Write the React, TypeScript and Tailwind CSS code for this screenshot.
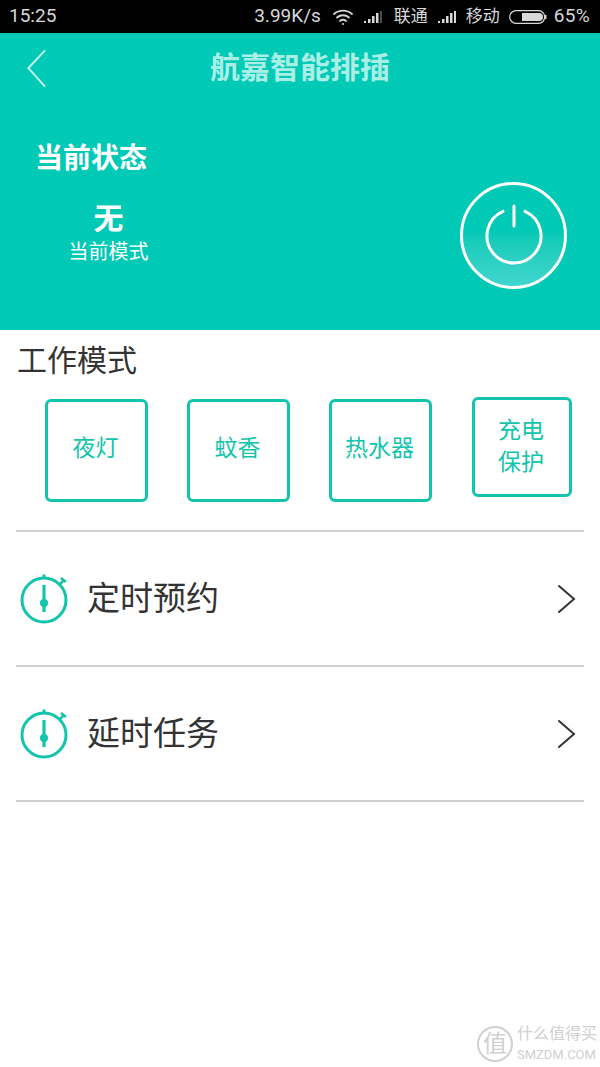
const FONT = "font-['Roboto','Noto_Sans_CJK_SC',sans-serif]";

function WifiIcon() {
  return (
    <svg viewBox="0 0 22 18" className="h-[18px] w-[22px]" fill="none" stroke="#d8d8d8" strokeWidth="1.8" strokeLinecap="round">
      <path d="M2 6c5-4.500 13-4.500 18 0" />
      <path d="M5 9.500c3.400-3 8.600-3 12 0" />
      <path d="M8 13c1.800-1.500 4.200-1.500 6 0" />
      <circle cx="11" cy="16" r="1" fill="#d8d8d8" stroke="none" />
    </svg>
  );
}

function SignalIcon({ dim }: { dim?: boolean }) {
  return (
    <svg viewBox="0 0 20 14" className="h-[14px] w-[20px]" fill="#d8d8d8">
      <rect x="1" y="11" width="2" height="2" />
      <rect x="5" y="9" width="2.500" height="4" />
      <rect x="9" y="6" width="2.500" height="7" />
      <rect x="13" y="3" width="2.500" height="10" />
      <rect x="17" y="1" width="2" height="12" opacity={dim ? 0.35 : 1} />
    </svg>
  );
}

function BatteryIcon() {
  return (
    <svg viewBox="0 0 38 14" className="h-[14px] w-[38px]" fill="none">
      <rect x="0.700" y="0.700" width="35" height="12.600" rx="6.300" stroke="#d8d8d8" strokeWidth="1.200" />
      <path d="M13 3h17a4 4 0 0 1 0 8H13z" fill="#d8d8d8" />
      <rect x="36" y="5" width="1.500" height="4" fill="#d8d8d8" />
    </svg>
  );
}

function StatusBar() {
  return (
    <div className="flex h-[33px] items-center justify-between bg-black pl-[9px] pr-[10px] text-[19px] text-[#d8d8d8]">
      <span>15:25</span>
      <div className="flex items-center">
        <span>3.99K/s</span>
        <span className="ml-[11px]"><WifiIcon /></span>
        <span className="ml-[9px]"><SignalIcon dim /></span>
        <span className="ml-[11px] text-[17px]">联通</span>
        <span className="ml-[9px]"><SignalIcon /></span>
        <span className="ml-[9px] text-[17px]">移动</span>
        <span className="ml-[9px]"><BatteryIcon /></span>
        <span className="ml-[7px] tracking-[0.3px]">65%</span>
      </div>
    </div>
  );
}

function PowerButton() {
  return (
    <div className="flex h-[107px] w-[107px] items-center justify-center rounded-full border-[3px] border-white bg-gradient-to-b from-[#00c9b5] from-45% to-[#3fd6cf]">
      <svg viewBox="0 0 64 64" className="h-[64px] w-[64px]" fill="none" stroke="white" strokeWidth="3" strokeLinecap="round">
        <path d="M21 7.300a27 27 0 1 0 22 0" />
        <path d="M32 2v20" />
      </svg>
    </div>
  );
}

function Header() {
  return (
    <div className="h-[297px] bg-[#00c9b5]">
      <div className="relative flex h-[70px] items-center justify-center">
        <svg viewBox="0 0 20 40" className="absolute left-[26px] top-[17px] h-[38px] w-[20px]" fill="none" stroke="#c8f4ee" strokeWidth="2" strokeLinecap="round">
          <path d="M19 1 2 19l17 19" />
        </svg>
        <span className="mt-[-2px] text-[30px] font-bold text-[#a9efe6]">航嘉智能排插</span>
      </div>
      <div className="flex items-start justify-between pl-[35px] pr-[33px]">
        <div className="w-[147px] pt-[38px] text-white">
          <div className="text-[28px] leading-[36px] font-bold">当前状态</div>
          <div className="mt-[24px] text-center text-[30px] leading-[36px] font-bold">无</div>
          <div className="mt-[2px] text-center text-[20px] leading-[26px]">当前模式</div>
        </div>
        <div className="pt-[79px]">
          <PowerButton />
        </div>
      </div>
    </div>
  );
}

function ModeButton({ lines, className }: { lines: string[]; className: string }) {
  return (
    <div className={`flex flex-col items-center justify-center rounded-[6px] border-[3px] border-[#13c4ac] pr-[2px] text-[23px] leading-[32px] text-[#13c4ac] ${className}`}>
      {lines.map((line) => (
        <span key={line}>{line}</span>
      ))}
    </div>
  );
}

function ClockIcon() {
  return (
    <svg viewBox="0 0 50 52" className="h-[52px] w-[50px]" fill="none" stroke="#13c4ac">
      <circle cx="24" cy="28" r="22" strokeWidth="3" />
      <path d="M24 2.500v4" strokeWidth="3" />
      <path d="M40 12l4-4M41 6l5 4" strokeWidth="2.500" />
      <path d="M24 13v27" strokeWidth="3.200" />
      <circle cx="24" cy="31" r="4" fill="#13c4ac" stroke="none" />
    </svg>
  );
}

function TaskRow({ label }: { label: string }) {
  return (
    <div className="flex h-[135px] items-center border-b-2 border-[#cfcfcf]">
      <div className="ml-[4px] mt-[-2px]">
        <ClockIcon />
      </div>
      <span className="ml-[17px] text-[33px] text-[#333333]">{label}</span>
      <svg viewBox="0 0 20 30" className="ml-auto mr-[7px] h-[30px] w-[20px]" fill="none" stroke="#333333" strokeWidth="2" strokeLinecap="round">
        <path d="M2 2l15 13L2 28" />
      </svg>
    </div>
  );
}

function Watermark() {
  return (
    <div className="absolute bottom-[4px] right-[3px] flex items-center gap-[4px] text-[#d0d0d0]">
      <div className="flex h-[36px] w-[36px] items-center justify-center rounded-full border-2 border-[#d0d0d0] text-[24px] leading-none">值</div>
      <div className="flex flex-col">
        <span className="text-[16px] leading-[20px] whitespace-nowrap">什么值得买</span>
        <span className="mt-[3px] text-[13px] leading-[16px] whitespace-nowrap">SMZDM.COM</span>
      </div>
    </div>
  );
}

export default function App() {
  return (
    <div className={`relative h-[1067px] w-[600px] overflow-hidden bg-white ${FONT}`}>
      <StatusBar />
      <Header />
      <div className="pl-[17px] pt-[12px] text-[30px] leading-[38px] text-[#333333]">工作模式</div>
      <div className="relative flex items-start pl-[45px] pt-[19px]">
        <ModeButton lines={["夜灯"]} className="h-[103px] w-[103px] pb-[4px]" />
        <ModeButton lines={["蚊香"]} className="ml-[39px] h-[103px] w-[103px] pb-[4px]" />
        <ModeButton lines={["热水器"]} className="ml-[39px] h-[103px] w-[103px] pb-[4px]" />
        <ModeButton lines={["充电", "保护"]} className="ml-[40px] mt-[-2px] h-[100px] w-[100px]" />
      </div>
      <div className="mx-[16px] mt-[28px] border-t-2 border-[#cfcfcf]">
        <TaskRow label="定时预约" />
        <TaskRow label="延时任务" />
      </div>
      <Watermark />
    </div>
  );
}
